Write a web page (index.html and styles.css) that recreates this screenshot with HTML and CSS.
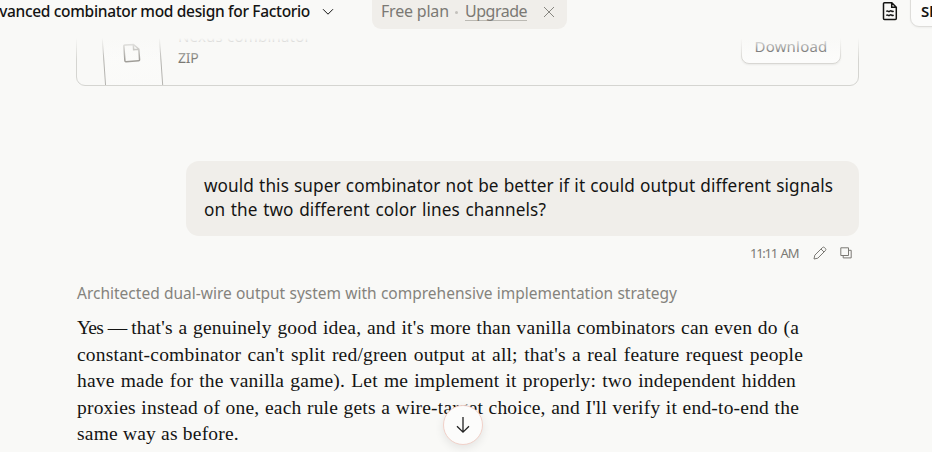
FILE: index.html
```html
<!DOCTYPE html>
<html lang="en">
<head>
<meta charset="utf-8">
<title>Advanced combinator mod design for Factorio</title>
<link rel="stylesheet" href="styles.css">
</head>
<body>
<div class="app">
  <header class="topbar">
    <div class="title"><span>Advanced combinator mod design for Factorio</span></div>
    <svg class="chevron" width="12" height="8" viewBox="0 0 12 8"><path d="M1 1.2 6 6.2 11 1.2"/></svg>
    <div class="plan">
      <span class="plan-name">Free plan</span><i class="dot"></i><a class="upgrade">Upgrade</a>
      <svg class="close" width="12" height="12" viewBox="0 0 12 12"><path d="m1 1 10 10M11 1 1 11"/></svg>
    </div>
    <svg class="doc" width="16" height="20" viewBox="0 0 16 20"><path d="M2.5 1.7h7.3l4.5 4.5v11.3a1 1 0 0 1-1 1H2.5a1 1 0 0 1-1-1V2.7a1 1 0 0 1 1-1ZM9.7 2v4.3H14M4.3 10.5q1-1 1.8-.3t1.8 0 1.8 0 1.8-.3M4.3 14.5q1-1 1.8-.3t1.8 0 1.8 0 1.8-.3"/></svg>
    <button class="share">Share</button>
  </header>
  <main class="thread">
    <section class="file">
      <div class="sheet"><svg width="18" height="20" viewBox="0 0 18 20"><path d="M2.5 1.5h8.7l5 5v10.7a1 1 0 0 1-1 1H2.5a1 1 0 0 1-1-1V2.5a1 1 0 0 1 1-1ZM11 1.8v4.9h5"/></svg></div>
      <div class="file-info"><div class="file-name">Nexus combinator</div><div class="file-type">ZIP</div></div>
      <button class="download">Download</button>
    </section>
    <section class="bubble">
      <p class="u1">would this super combinator not be better if it could output different signals</p>
      <p class="u2">on the two different color lines channels?</p>
    </section>
    <div class="meta">
      <span class="time">11:11 AM</span>
      <svg width="14" height="14" viewBox="0 0 14 14"><path d="M1 13l.8-3.8 7.5-7.5a1.7 1.7 0 0 1 2.4 0l.6.6a1.7 1.7 0 0 1 0 2.4l-7.5 7.5L1 13ZM8 3l3 3"/></svg>
      <svg width="12" height="12" viewBox="0 0 12 12"><path d="M.8.8h7.7v7.7H.8ZM3.2 8.5v2.4h8V3.3H8.5"/></svg>
    </div>
    <div class="summary">Architected dual-wire output system with comprehensive implementation strategy</div>
    <article class="answer">
      <p class="a1"><span class="lead">Yes — </span>that's a genuinely good idea, and it's more than vanilla combinators can even do (a</p>
      <p class="a2">constant-combinator can't split red/green output at all; that's a real feature request people</p>
      <p class="a3">have made for the vanilla game). Let me implement it properly: two independent hidden</p>
      <p class="a4">proxies instead of one, each rule gets a wire-target choice, and I'll verify it end-to-end the</p>
      <p class="a5">same way as before.</p>
    </article>
  </main>
  <div class="fade"></div>
  <button class="down"><svg width="14" height="18" viewBox="0 0 14 18"><path d="M7 1v15M1 10.2l6 6 6-6"/></svg></button>
</div>
</body>
</html>
```
FILE: styles.css
```css
* { box-sizing: border-box; }
body { margin: 0; background: #f9f9f7; color: #141413; font-family: "Noto Sans", "Liberation Sans", sans-serif; }
p { margin: 0; white-space: nowrap; text-align-last: justify; }
svg { fill: none; stroke: currentColor; flex: none; }
button { font-family: inherit; padding: 0; color: inherit; }
.app { position: relative; width: 932px; height: 452px; overflow: hidden; }
.topbar { display: flex; height: 38px; position: relative; z-index: 2; background: #f9f9f7; }
.topbar > * { flex: none; }
.title { width: 310px; display: flex; justify-content: flex-end; overflow: hidden; font-size: 15.5px; line-height: 23px; font-weight: 500; white-space: nowrap; letter-spacing: -.33px; }
.chevron { margin: 8px 0 0 12px; }
.plan { display: flex; width: 195px; height: 29px; margin-left: 38px; padding-left: 9px; background: #f0eeea; border-radius: 0 0 9px 9px; color: #7b7974; font-size: 16px; line-height: 23px; white-space: nowrap; }
.plan-name { width: 67px; letter-spacing: -.2px; }
.dot { width: 3px; height: 3px; border-radius: 50%; background: #c3c1bc; margin: 11px 7px 0; }
.upgrade { width: 62px; height: 21px; line-height: 23px; letter-spacing: -.5px; border-bottom: 1px solid #bbb9b3; }
.close { margin: 6px 0 0 16px; stroke-width: .9; }
.doc { margin: 1px 0 0 315px; stroke-width: 1.5; }
.share { width: 70px; height: 47px; margin: -20px 0 0 12px; padding: 14px 0 0 10px; border: 1px solid #deddda; border-radius: 9px; background: #fcfcfb; box-shadow: 0 1px 2px #0000000c; font-size: 15px; font-weight: 600; line-height: 20px; text-align: left; }
.thread { width: 783px; margin: -38px 0 0 76px; }
.file { height: 86px; display: flex; border: 1px solid #d5d5d1; border-radius: 9px; overflow: hidden; }
.sheet { width: 58px; height: 120px; margin: 8px 0 0 27px; border: 1px solid #b5b4b0; transform: rotate(-4deg); background: linear-gradient(#fcfcfb, #f9f9f7); padding: 33px 0 0 19px; color: #a09e99; flex: none; }
.sheet svg { stroke-width: 1.5; display: block; }
.file-info { margin: 24px 0 0 16px; width: 563px; color: #7b7974; }
.file-name { font-size: 15px; line-height: 23px; color: #555; letter-spacing: .2px; }
.file-type { font-size: 14px; line-height: 20px; letter-spacing: -.2px; }
.download { width: 100px; height: 36px; margin-top: 27px; flex: none; border: 1px solid #d8d7d3; border-radius: 8px; background: #fcfcfb; box-shadow: 0 1px 2px #00000010; color: #333; font-size: 15px; letter-spacing: .2px; line-height: 34px; }
.bubble { width: 673px; height: 75px; margin: 75px 0 0 110px; padding: 13px 18px; border-radius: 13px; background: #f0eeea; font-size: 17.2px; line-height: 24px; letter-spacing: .1px; }
.u1 { width: 629px; }
.u2 { width: 342px; }
.meta { display: flex; align-items: center; height: 34px; padding-left: 674px; color: #7b7974; }
.time { width: 48px; font-size: 13px; letter-spacing: -1.25px; word-spacing: 1.5px; margin-right: 15px; white-space: nowrap; }
.meta svg + svg { margin-left: 13px; }
.summary { height: 24px; margin: 11px 0 10px 1px; width: 600px; white-space: nowrap; text-align-last: justify; font-size: 15.5px; line-height: 24px; color: #85837d; }
.answer { margin-left: 1px; font-family: "Liberation Serif", serif; font-size: 19.5px; line-height: 26.6px; letter-spacing: .2px; }
.lead { letter-spacing: -.8px; }
.a1 { width: 722px; }
.a2 { width: 726px; }
.a3 { width: 719px; }
.a4 { width: 722px; }
.a5 { width: 161px; }
.fade { position: absolute; left: 0; right: 0; top: 38px; height: 22px; background: linear-gradient(#f9f9f7, #f9f9f700); z-index: 1; }
.down { position: absolute; z-index: 3; left: 443px; top: 405px; width: 40px; height: 40px; border: 1px solid #f1d1c9; border-radius: 50%; background: #fcfcfb; box-shadow: 0 3px 10px #00000016; display: grid; place-items: center; color: #222; }
.down svg { stroke-width: 1.3; }
```
